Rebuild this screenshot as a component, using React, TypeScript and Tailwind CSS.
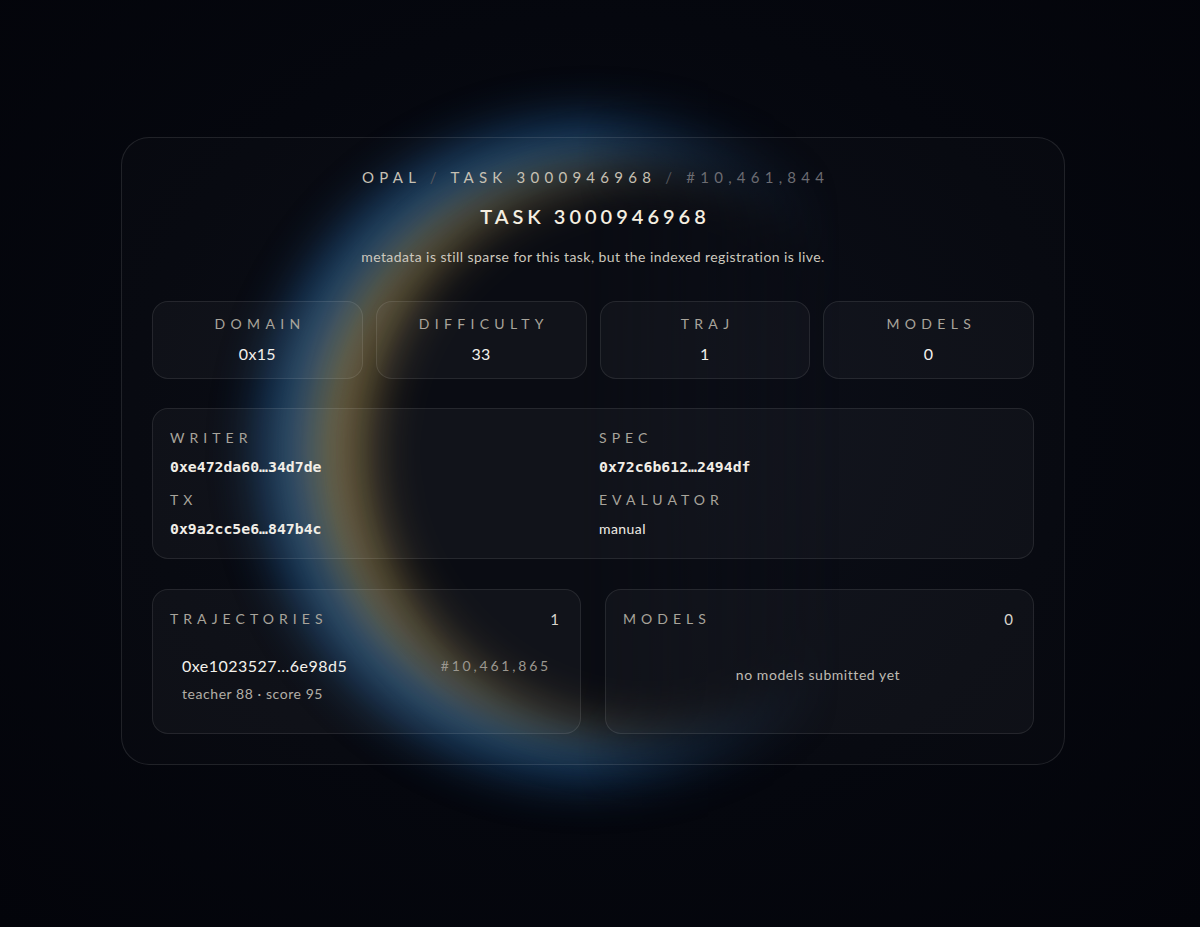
const sans = { fontFamily: "Lato, 'Noto Sans', sans-serif" };
const mono = { fontFamily: "'DejaVu Sans Mono', 'Liberation Mono', monospace" };

const stats = [
  { label: "DOMAIN", value: "0x15" },
  { label: "DIFFICULTY", value: "33" },
  { label: "TRAJ", value: "1" },
  { label: "MODELS", value: "0" },
];

function Label({ children }: { children: React.ReactNode }) {
  return <div className="text-[14px] leading-5 tracking-[0.36em] text-[#a8a49b]">{children}</div>;
}

function Field({ label, value, isMono = true }: { label: string; value: string; isMono?: boolean }) {
  return (
    <div>
      <Label>{label}</Label>
      <div
        className={
          isMono
            ? "mt-[9px] text-[14.8px] leading-5 font-semibold text-[#f1eee7]"
            : "mt-[9px] text-[14px] leading-5 tracking-[0.03em] text-[#f1eee7]"
        }
        style={isMono ? mono : sans}
      >
        {value}
      </div>
    </div>
  );
}

export default function App() {
  return (
    <div
      className="relative h-[927px] w-full overflow-hidden bg-[radial-gradient(ellipse_at_50%_45%,#090c16_0%,#05070e_55%,#03040a_100%)]"
      style={sans}
    >
      {/* eclipse glow */}
      <div className="pointer-events-none absolute inset-0 [mask-image:linear-gradient(to_right,black_48%,transparent_70%)]">
        <div className="absolute left-[240px] top-[100px] h-[700px] w-[700px] rounded-full bg-[radial-gradient(circle_closest-side,#a08545_0%,#a08545_72%,#1d5a96_86%,rgba(20,60,110,0)_100%)] opacity-75 blur-[22px]" />
        <div className="absolute left-[362px] top-[165px] h-[575px] w-[575px] rounded-full bg-[#070910] blur-[26px]" />
      </div>

      <div className="relative pl-[121px] pt-[137px]">
        <div className="w-[944px] rounded-[28px] border border-white/10 bg-white/[0.015] px-[30px] pb-[30px] pt-[29px]">
          <div className="pl-[0.35em] text-center text-[15px] leading-5 tracking-[0.35em] text-[#c6c0b3]">
            OPAL <span className="text-[#55565c]">/</span> TASK 3000946968{" "}
            <span className="text-[#55565c]">/</span> <span className="text-[#6c6c72]">#10,461,844</span>
          </div>
          <div className="mt-[15px] pl-[0.2em] text-center text-[20px] font-semibold leading-7 tracking-[0.2em] text-[#f5efe1]">
            TASK 3000946968
          </div>
          <div className="mt-[17px] text-center text-[14px] leading-5 tracking-[0.03em] text-[#cdc8be]">
            metadata is still sparse for this task, but the indexed registration is live.
          </div>

          <div className="mt-[34px] grid grid-cols-4 gap-[13px]">
            {stats.map((s) => (
              <div
                key={s.label}
                className="flex h-[78px] flex-col items-center rounded-2xl border border-white/[0.09] bg-white/[0.03] pt-3"
              >
                <div className="pl-[0.38em] text-[14px] leading-5 tracking-[0.38em] text-[#a8a49b]">{s.label}</div>
                <div className="mt-[10px] text-[16px] leading-5 tracking-[0.02em] text-[#f3f1ec]">{s.value}</div>
              </div>
            ))}
          </div>

          <div className="mt-[29px] grid grid-cols-2 gap-x-[12px] gap-y-[13px] rounded-2xl border border-white/[0.09] bg-white/[0.03] px-[17px] py-[19px]">
            <Field label="WRITER" value="0xe472da60…34d7de" />
            <Field label="SPEC" value="0x72c6b612…2494df" />
            <Field label="TX" value="0x9a2cc5e6…847b4c" />
            <Field label="EVALUATOR" value="manual" isMono={false} />
          </div>

          <div className="mt-[30px] grid grid-cols-2 gap-[24px]">
            <div className="h-[145px] rounded-2xl border border-white/[0.09] bg-white/[0.03] pl-[17px] pr-[21px] pt-[19px]">
              <div className="flex items-center justify-between">
                <Label>TRAJECTORIES</Label>
                <div className="text-[15px] leading-5 text-[#d8d4cc]">1</div>
              </div>
              <div className="ml-3 mr-[8px] mt-[27px]">
                <div className="flex items-center justify-between">
                  <div className="text-[16px] leading-5 tracking-[0.03em] text-[#f3f1ec]">0xe1023527...6e98d5</div>
                  <div className="text-[14px] leading-5 tracking-[0.2em] text-[#9b978f]">#10,461,865</div>
                </div>
                <div className="mt-2 text-[14px] leading-5 tracking-[0.04em] text-[#b2aea6]">teacher 88 · score 95</div>
              </div>
            </div>

            <div className="h-[145px] rounded-2xl border border-white/[0.09] bg-white/[0.03] pl-[17px] pr-[20px] pt-[19px]">
              <div className="flex items-center justify-between">
                <Label>MODELS</Label>
                <div className="text-[15px] leading-5 text-[#d8d4cc]">0</div>
              </div>
              <div className="mt-[36px] text-center text-[14px] leading-5 tracking-[0.04em] text-[#bfbbb3]">
                no models submitted yet
              </div>
            </div>
          </div>
        </div>
      </div>
    </div>
  );
}
